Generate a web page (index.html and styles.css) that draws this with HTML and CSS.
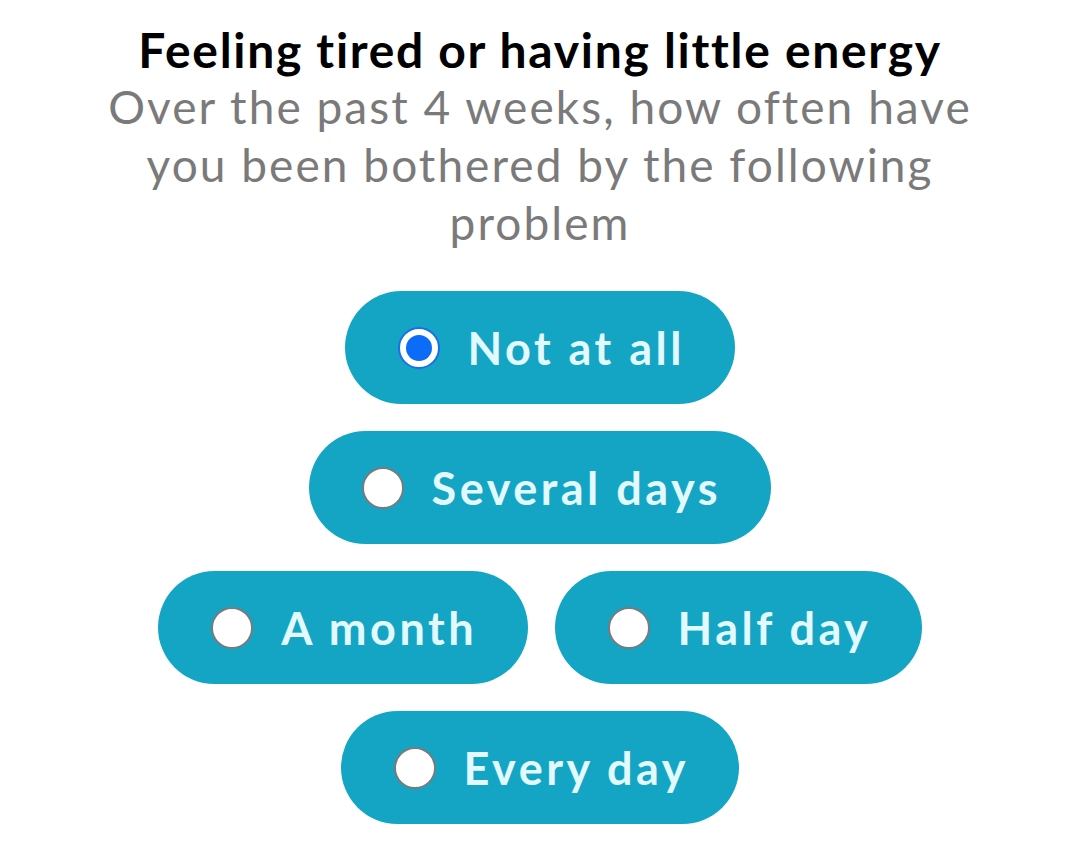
FILE: index.html
```html
<!DOCTYPE html>
<html lang="en">
<head>
<meta charset="utf-8">
<title>Survey question</title>
<link rel="stylesheet" href="styles.css">
</head>
<body>
<main class="question">
  <h1 class="title">Feeling tired or having little energy</h1>
  <p class="subtitle">Over the past 4 weeks, how often have you been bothered by the following problem</p>
  <div class="options">
    <div class="row">
      <label class="option">
        <span class="radio radio--checked"><span class="dot"></span></span>
        <span class="label">Not at all</span>
      </label>
    </div>
    <div class="row">
      <label class="option">
        <span class="radio"></span>
        <span class="label">Several days</span>
      </label>
    </div>
    <div class="row">
      <label class="option">
        <span class="radio"></span>
        <span class="label">A month</span>
      </label>
      <label class="option">
        <span class="radio"></span>
        <span class="label">Half day</span>
      </label>
    </div>
    <div class="row">
      <label class="option">
        <span class="radio"></span>
        <span class="label">Every day</span>
      </label>
    </div>
  </div>
</main>
</body>
</html>
```
FILE: styles.css
```css
html, body {
  margin: 0;
  padding: 0;
  background: #ffffff;
}
body {
  font-family: "Lato", "Noto Sans", sans-serif;
  width: 1080px;
  height: 853px;
  overflow: hidden;
}
.question {
  display: flex;
  flex-direction: column;
  align-items: center;
  padding-top: 22px;
}
.title {
  margin: 0;
  font-size: 48px;
  line-height: 56px;
  font-weight: 700;
  letter-spacing: 1.7px;
  color: #000000;
  text-align: center;
}
.subtitle {
  margin: 0;
  max-width: 900px;
  font-size: 46px;
  line-height: 58px;
  font-weight: 400;
  letter-spacing: 2.05px;
  color: #7a7a7a;
  text-align: center;
}
.options {
  display: flex;
  flex-direction: column;
  align-items: center;
  gap: 27px;
  margin-top: 39px;
}
.row {
  display: flex;
  justify-content: center;
  gap: 27px;
}
.option {
  display: flex;
  align-items: center;
  gap: 28px;
  height: 113px;
  padding: 0 54px 0 53px;
  box-sizing: border-box;
  border-radius: 57px;
  background: #14a5c5;
}
.radio {
  flex: none;
  width: 42px;
  height: 42px;
  box-sizing: border-box;
  border-radius: 50%;
  background: #ffffff;
  border: 2px solid #7a7a7a;
  display: flex;
  align-items: center;
  justify-content: center;
}
.radio--checked {
  border: 2px solid #1a6ee8;
  background: #ffffff;
}
.dot {
  width: 26px;
  height: 26px;
  border-radius: 50%;
  background: #0b6cf7;
}
.label {
  font-size: 45px;
  font-weight: 700;
  letter-spacing: 3.5px;
  margin-right: -3.5px;
  color: #e2f9fe;
  white-space: nowrap;
}
```
